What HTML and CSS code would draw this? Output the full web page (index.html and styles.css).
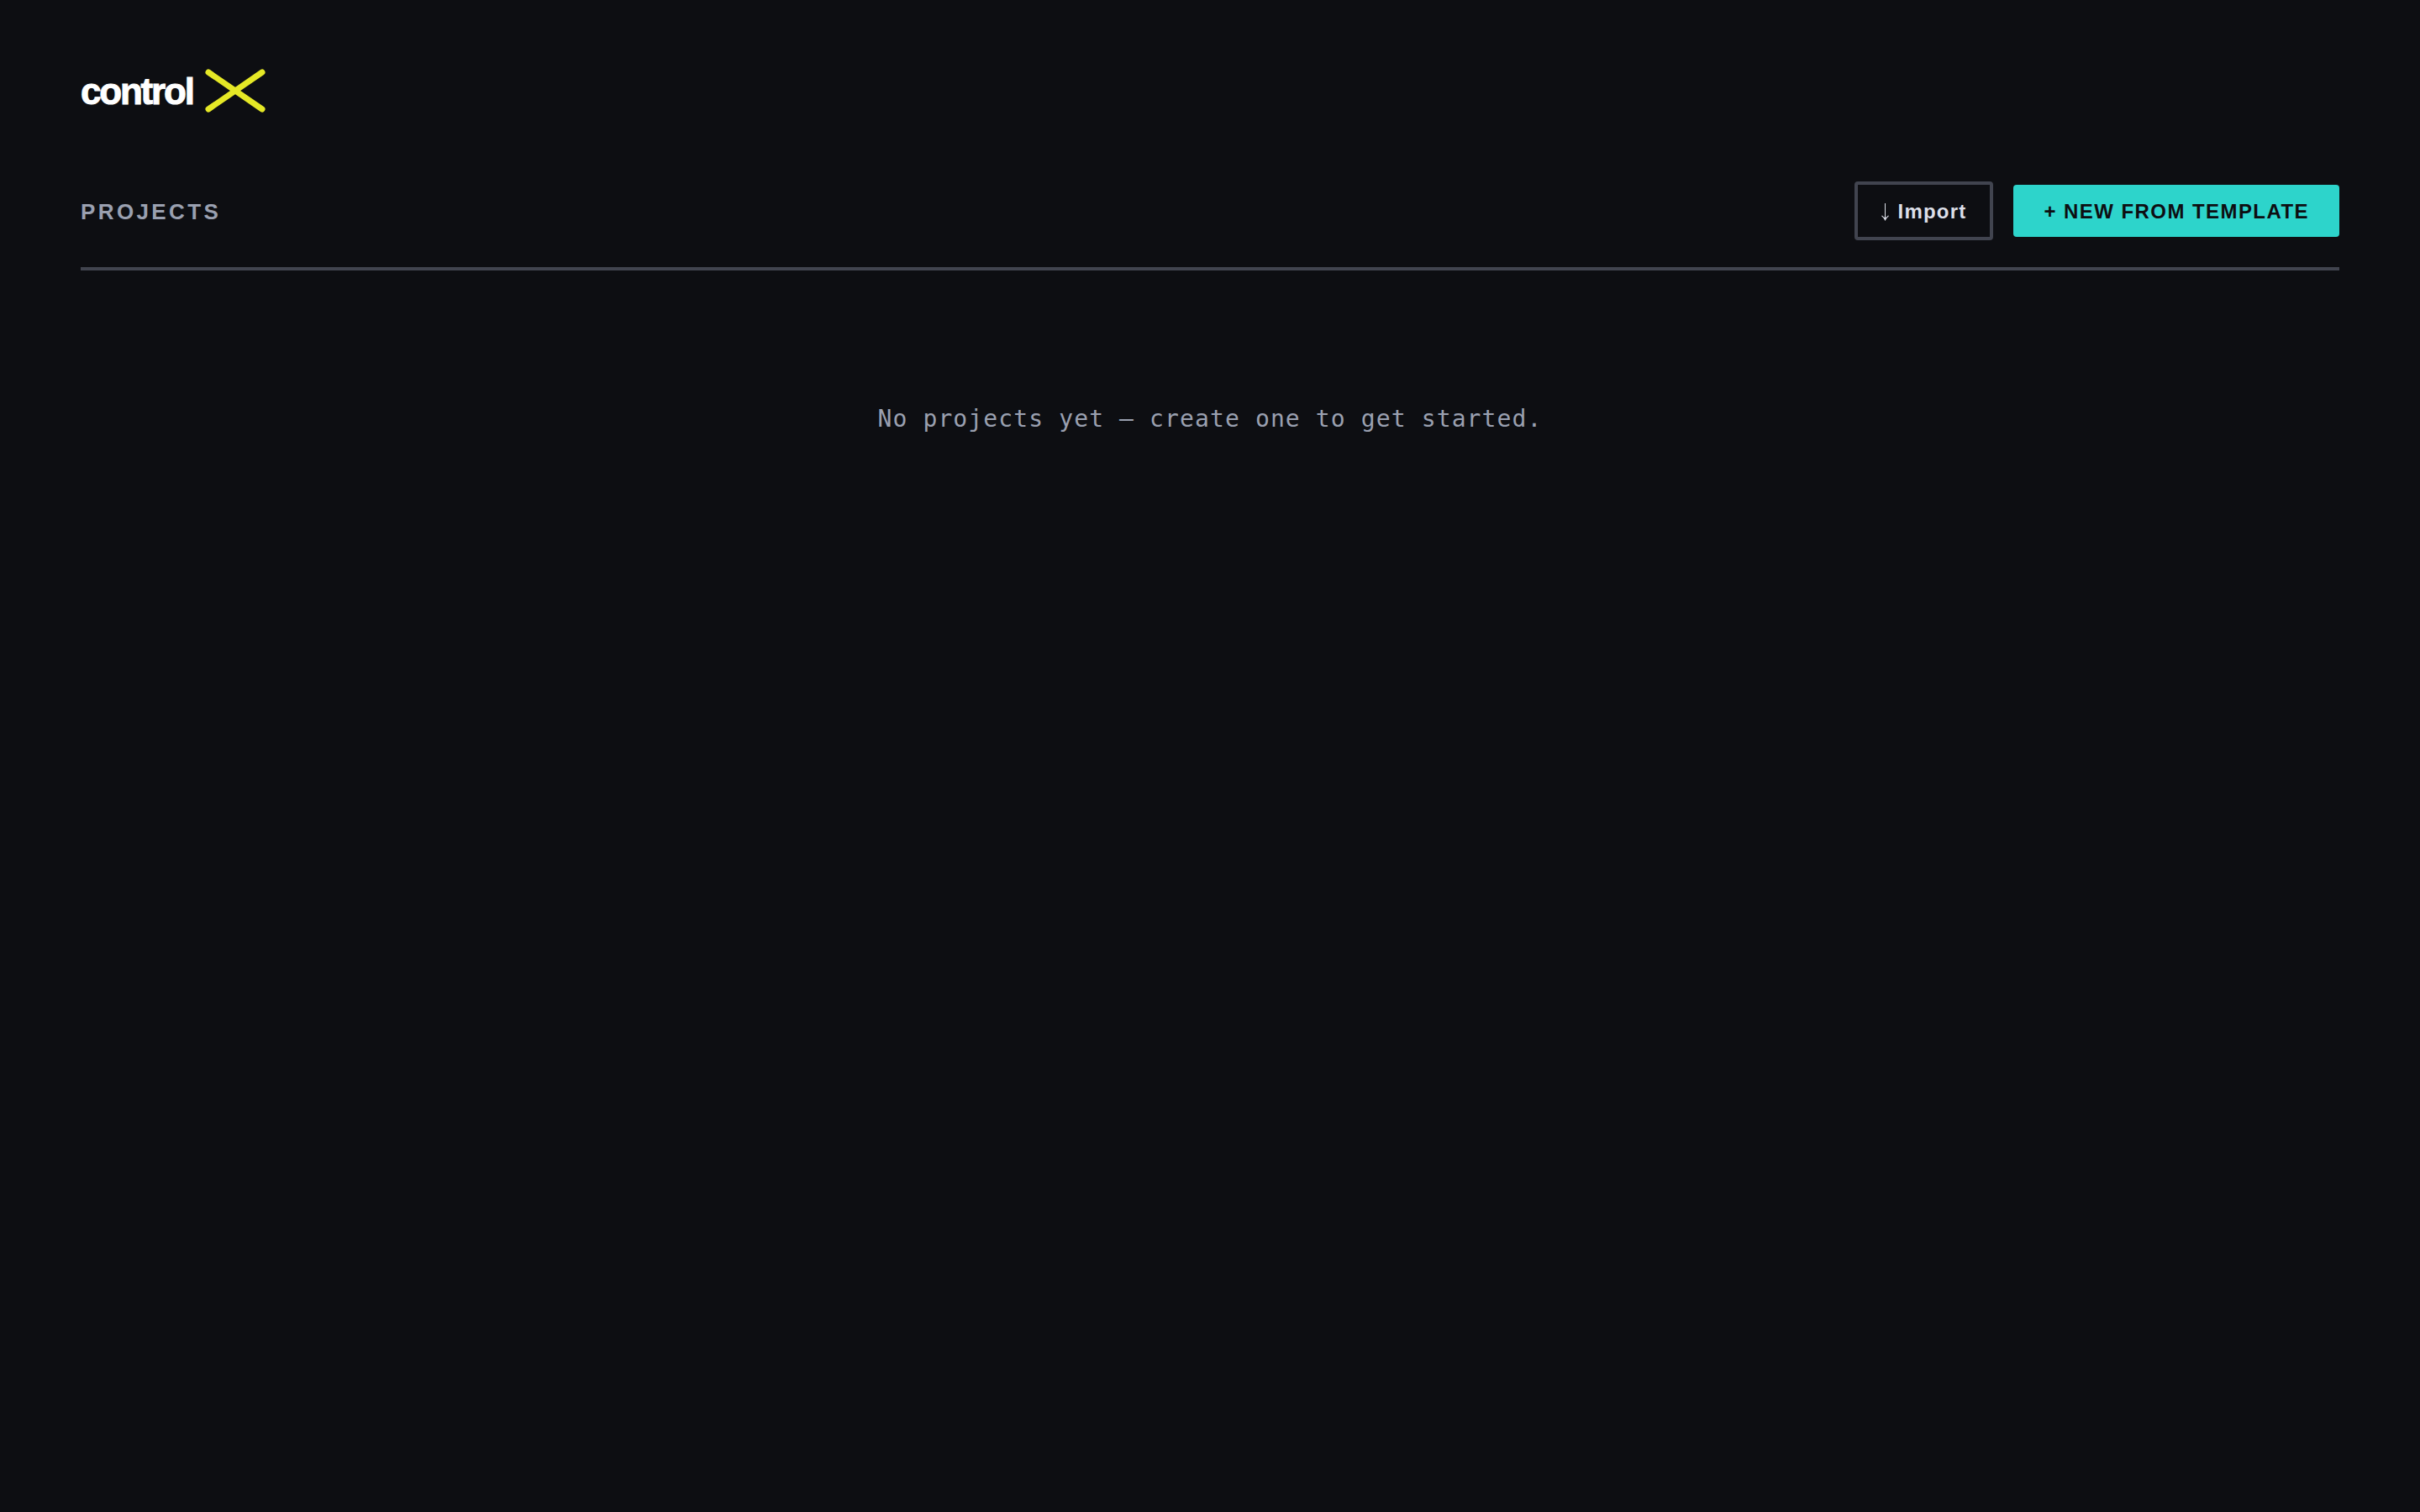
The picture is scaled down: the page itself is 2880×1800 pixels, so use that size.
FILE: index.html
```html
<!DOCTYPE html>
<html lang="en">
  <head>
    <meta charset="UTF-8" />
    <meta name="viewport" content="width=device-width,initial-scale=1" />
    <title>controlX</title>
    <link rel="stylesheet" href="styles.css">
  </head>
  <body>
    <div class="logo">
      <span class="logo-text">control</span>
      <svg class="logo-x" viewBox="0 0 72 52" aria-hidden="true">
        <path d="M4 4L68 48M68 4L4 48" />
      </svg>
    </div>
    <div class="header">
      <h1>Projects</h1>
      <div class="actions">
        <button class="btn import" type="button">
          <svg class="arrow" viewBox="0 0 10 22" aria-hidden="true">
            <path class="shaft" d="M4.5 1V20" />
            <path class="head" d="M0 16L1 15.500Q3 18 4.500 18Q6 18 8 15.500L9 16Q6 18.500 4.500 22Q3 18.500 0 16Z" />
          </svg>
          Import
        </button>
        <button class="btn new" type="button">+ New from template</button>
      </div>
    </div>
    <p class="empty">No projects yet — create one to get started.</p>
  </body>
</html>
```
FILE: styles.css
```css
* {
  --bg: #0d0e12;
  --white: #fff;
  --text: #dcdfe8;
  --muted: #9aa0b0;
  --line: #41444f;
  --teal: #2dd4cb;
  --yellow: #e5e826;
  box-sizing: border-box;
}
body {
  margin: 0;
  padding: 80px 96px;
  background: var(--bg);
  color: var(--text);
  font-family: "Liberation Sans", Arial, sans-serif;
}
.logo {
  display: flex;
  align-items: center;
  gap: 14px;
  height: 56px;
}
.logo-text {
  padding-top: 2px;
  color: var(--white);
  font-size: 44px;
  font-weight: bold;
  letter-spacing: -0.05em;
  line-height: 56px;
  -webkit-text-stroke: 1px var(--white);
}
.logo-x {
  width: 72px;
  height: 52px;
  fill: none;
  stroke: var(--yellow);
  stroke-width: 7;
  stroke-linecap: round;
}
.header {
  display: flex;
  justify-content: space-between;
  align-items: center;
  margin-top: 80px;
  padding-bottom: 32px;
  border-bottom: 4px solid var(--line);
}
h1 {
  margin: 0;
  padding-top: 2px;
  color: var(--muted);
  font-size: 26px;
  letter-spacing: 0.13em;
  text-transform: uppercase;
}
.actions {
  display: flex;
  align-items: center;
  gap: 24px;
}
.btn {
  border: none;
  border-radius: 4px;
  font-family: inherit;
  font-size: 24px;
  font-weight: bold;
  line-height: 30px;
  cursor: pointer;
}
.import {
  display: flex;
  align-items: center;
  gap: 10px;
  padding: 17px 28px 15px;
  border: 4px solid var(--line);
  background: none;
  color: var(--text);
  letter-spacing: 0.05em;
}
.arrow {
  width: 10px;
  height: 22px;
}
.shaft {
  stroke: currentColor;
}
.head {
  fill: currentColor;
}
.new {
  padding: 17px 36px 15px;
  background: var(--teal);
  color: var(--bg);
  letter-spacing: 0.06em;
  text-transform: uppercase;
}
.empty {
  margin: 160px 0 0;
  color: var(--muted);
  font-family: "DejaVu Sans Mono", Menlo, monospace;
  font-size: 28px;
  letter-spacing: 0.04em;
  line-height: 34px;
  text-align: center;
}
```
